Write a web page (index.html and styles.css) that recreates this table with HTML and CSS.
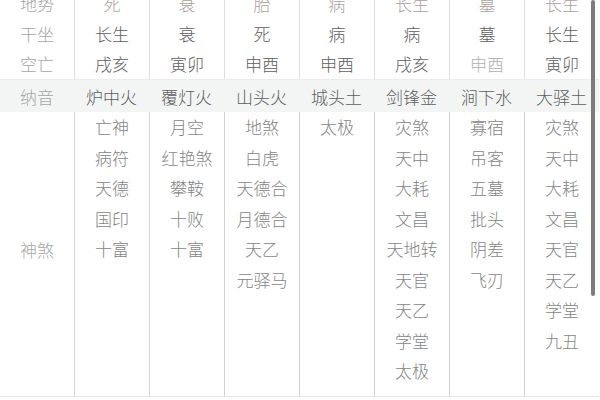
FILE: index.html
```html
<!DOCTYPE html>
<html lang="zh">
<head>
<meta charset="utf-8">
<link rel="stylesheet" href="styles.css">
</head>
<body>
<div class="page">
  <div class="sheet">
    <div class="lab">地势</div>
    <div class="c faded">死</div><div class="c faded">衰</div><div class="c faded">胎</div><div class="c faded">病</div><div class="c faded">长生</div><div class="c faded">墓</div><div class="c faded">长生</div>

    <div class="lab">干坐</div>
    <div class="c">长生</div><div class="c">衰</div><div class="c">死</div><div class="c">病</div><div class="c">病</div><div class="c">墓</div><div class="c">长生</div>

    <div class="lab">空亡</div>
    <div class="c">戌亥</div><div class="c">寅卯</div><div class="c">申酉</div><div class="c">申酉</div><div class="c">戌亥</div><div class="c light">申酉</div><div class="c">寅卯</div>

    <div class="band lab">纳音</div>
    <div class="band">炉中火</div><div class="band">覆灯火</div><div class="band">山头火</div><div class="band">城头土</div><div class="band">剑锋金</div><div class="band">涧下水</div><div class="band">大驿土</div>

    <div class="slab">神煞</div>
    <div class="col"><span>亡神</span><span>病符</span><span>天德</span><span>国印</span><span>十富</span></div>
    <div class="col"><span>月空</span><span>红艳煞</span><span>攀鞍</span><span>十败</span><span>十富</span></div>
    <div class="col"><span>地煞</span><span>白虎</span><span>天德合</span><span>月德合</span><span>天乙</span><span>元驿马</span></div>
    <div class="col"><span>太极</span></div>
    <div class="col"><span>灾煞</span><span>天中</span><span>大耗</span><span>文昌</span><span>天地转</span><span>天官</span><span>天乙</span><span>学堂</span><span>太极</span></div>
    <div class="col"><span>寡宿</span><span>吊客</span><span>五墓</span><span>批头</span><span>阴差</span><span>飞刃</span></div>
    <div class="col"><span>灾煞</span><span>天中</span><span>大耗</span><span>文昌</span><span>天官</span><span>天乙</span><span>学堂</span><span>九丑</span></div>
  </div>
  <div class="scroll"></div>
</div>
</body>
</html>
```
FILE: styles.css
```css
html, body {
  margin: 0;
  padding: 0;
  background: #fff;
  overflow: hidden;
}
body {
  font-family: "Noto Sans CJK SC", "Noto Sans", sans-serif;
  font-size: 17px;
  font-weight: 300;
  color: #5e5e5e;
}
.page {
  position: relative;
  width: 600px;
  height: 400px;
  overflow: hidden;
}
.sheet {
  margin-top: -11px;
  display: grid;
  grid-template-columns: 74px repeat(7, 75px);
}
.lab, .c, .band {
  height: 30px;
  line-height: 30px;
  text-align: center;
  white-space: nowrap;
}
.lab {
  color: #a6a6a6;
}
.c {
  border-left: 1px solid #dedede;
}
.faded {
  color: #ad9f9d;
}
.light {
  color: #afafaf;
}
.band {
  height: 33px;
  line-height: 33px;
  background: #f3f5f5;
  border-top: 1px solid #ececec;
  box-sizing: border-box;
  color: #5e5e5e;
}
.band.lab {
  color: #a6a6a6;
}
.slab {
  display: flex;
  align-items: center;
  justify-content: center;
  color: #a6a6a6;
  padding-bottom: 8px;
  border-bottom: 1px solid #e4e4e4;
}
.col {
  display: flex;
  flex-direction: column;
  align-items: center;
  border-left: 1px solid #d2d2d2;
  border-bottom: 1px solid #e4e4e4;
  padding-bottom: 9px;
  color: #858585;
}
.col span {
  height: 30.5px;
  line-height: 30.5px;
  white-space: nowrap;
}
.scroll {
  position: absolute;
  top: 0;
  left: 591px;
  width: 4px;
  height: 296px;
  background: #7c7c7c;
  border-radius: 2px;
}
```
